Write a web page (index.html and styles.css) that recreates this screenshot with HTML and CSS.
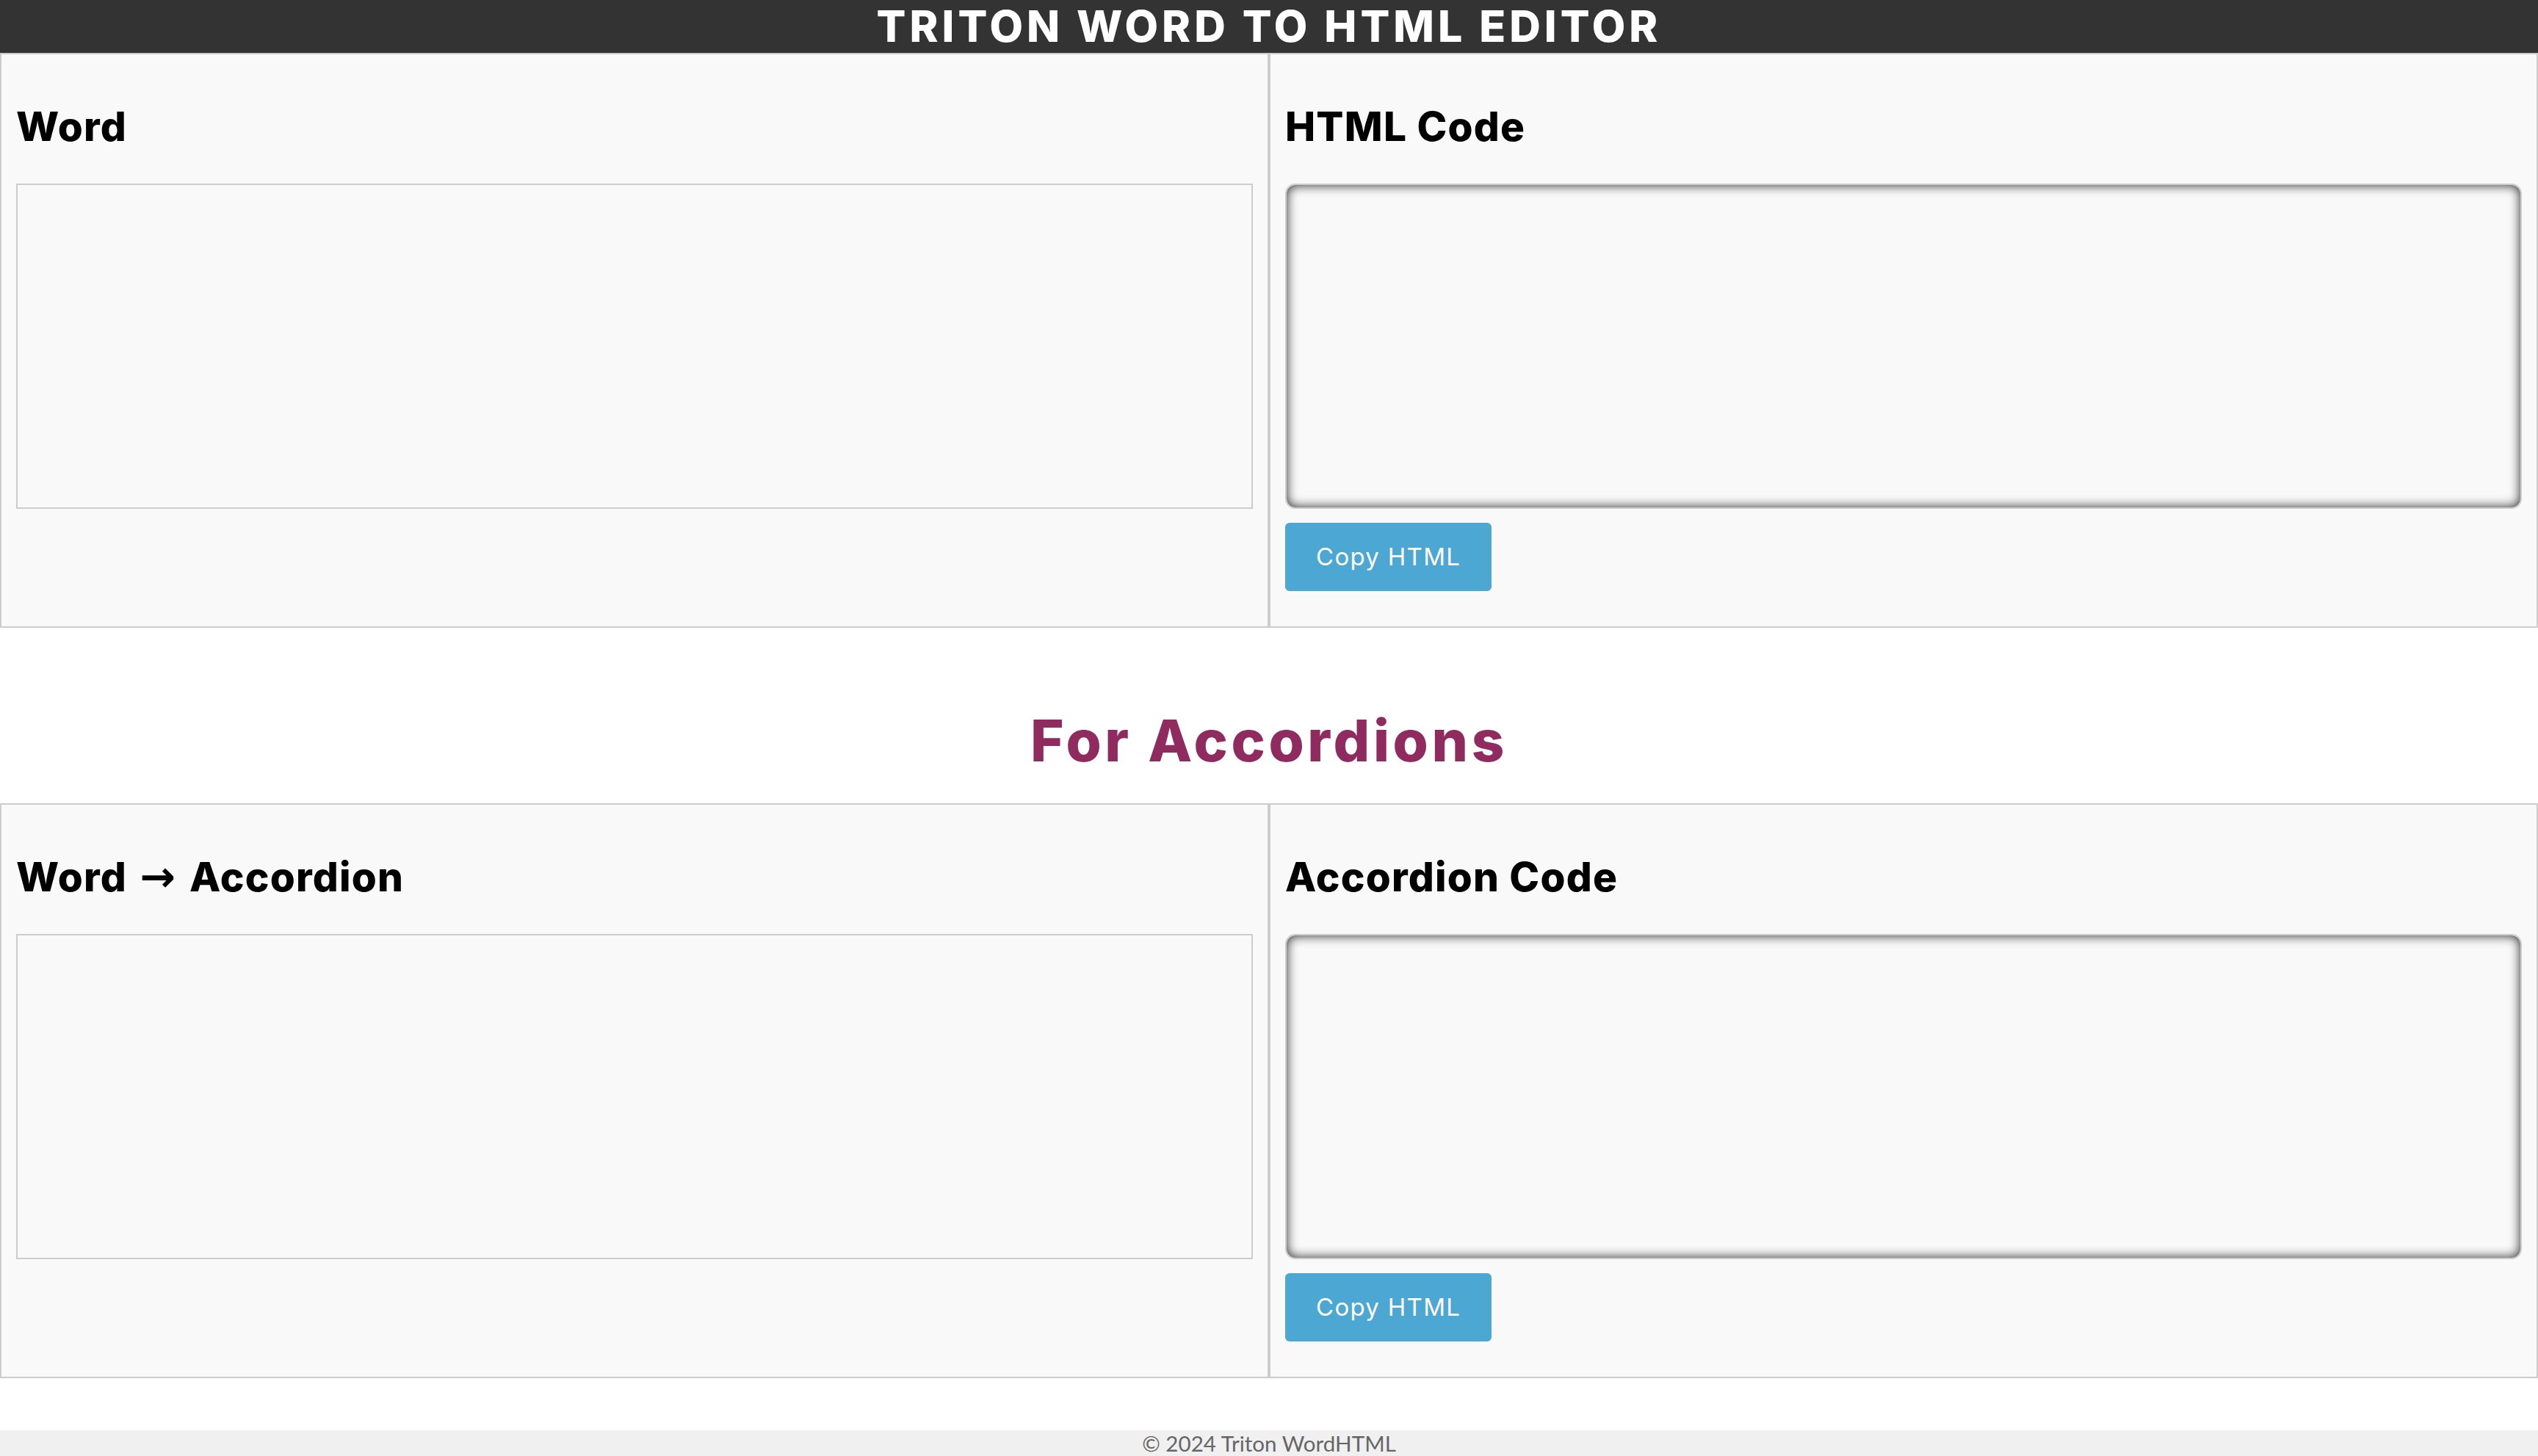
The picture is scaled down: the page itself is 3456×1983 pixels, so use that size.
FILE: index.html
```html
<!DOCTYPE html>
<html lang="en">
<head>
<meta charset="utf-8">
<title>Triton Word to HTML Editor</title>
<link rel="stylesheet" href="styles.css">
</head>
<body>
<header class="topbar">
  <h1 class="site-title">TRITON WORD TO HTML EDITOR</h1>
</header>
<main class="page">
  <section class="editor-row">
    <div class="panel">
      <h2 class="panel-title">Word</h2>
      <div class="word-box" contenteditable="true"></div>
    </div>
    <div class="panel">
      <h2 class="panel-title">HTML Code</h2>
      <textarea class="code-box"></textarea>
      <button class="copy-btn" type="button">Copy HTML</button>
    </div>
  </section>

  <h2 class="section-title">For Accordions</h2>

  <section class="editor-row">
    <div class="panel">
      <h2 class="panel-title">Word <span class="arrow">→</span> Accordion</h2>
      <div class="word-box" contenteditable="true"></div>
    </div>
    <div class="panel">
      <h2 class="panel-title">Accordion Code</h2>
      <textarea class="code-box"></textarea>
      <button class="copy-btn" type="button">Copy HTML</button>
    </div>
  </section>
</main>
<footer class="site-footer">
  <p class="copyright">© 2024 Triton WordHTML</p>
</footer>
</body>
</html>
```
FILE: styles.css
```css
* {
  box-sizing: border-box;
}

html, body {
  margin: 0;
  padding: 0;
}

body {
  background: #ffffff;
  font-family: Inter, "Open Sans", "DejaVu Sans", sans-serif;
  color: #000;
}

.topbar {
  background: #333333;
  height: 72px;
  display: flex;
  align-items: center;
  justify-content: center;
}

.site-title {
  margin: 0;
  color: #ffffff;
  font-family: Inter, "DejaVu Sans", sans-serif;
  font-weight: 800;
  font-size: 59px;
  line-height: 72px;
  letter-spacing: 5px;
  white-space: nowrap;
}

.page {
  display: flex;
  flex-direction: column;
}

.editor-row {
  display: grid;
  grid-template-columns: 1fr 1fr;
}

.panel {
  background: #f9f9f9;
  border: 2px solid #cccccc;
  padding: 20px;
  display: flex;
  flex-direction: column;
  align-items: flex-start;
}

.panel-title {
  margin: 45px 0;
  font-family: Inter, "DejaVu Sans", sans-serif;
  font-weight: 800;
  font-size: 55px;
  line-height: 66px;
  letter-spacing: 1.2px;
  color: #000;
}

.arrow {
  display: inline-block;
  margin: 0 6px 0 4px;
  font-size: 58px;
  letter-spacing: 0;
  font-family: "DejaVu Sans", sans-serif;
  font-weight: 700;
}

.word-box {
  width: 100%;
  height: 443px;
  border: 2px solid #cccccc;
  background: #f9f9f9;
}

.code-box {
  display: block;
  width: 100%;
  height: 443px;
  border: 2px solid #cccccc;
  border-radius: 14px;
  background: #f9f9f9;
  box-shadow: inset 0 0 15px #222222;
  resize: none;
  margin: 0;
  padding: 0;
}

.copy-btn {
  margin: 19px 0 28px;
  background: #4ca7d3;
  color: #ffffff;
  border: none;
  border-radius: 6px;
  padding: 26px 42px;
  font-family: Inter, "Open Sans", sans-serif;
  font-weight: 400;
  font-size: 33px;
  line-height: 41px;
  letter-spacing: 1.3px;
  cursor: pointer;
}

.section-title {
  margin: 107px 0 38px;
  text-align: center;
  color: #8f2b5f;
  font-family: Inter, "DejaVu Sans", sans-serif;
  font-weight: 800;
  font-size: 78px;
  line-height: 94px;
  letter-spacing: 4.6px;
}

.site-footer {
  margin-top: 71px;
  background: #f0f0f0;
  padding: 0 0 20px;
  text-align: center;
}

.copyright {
  margin: 0;
  font-family: Lato, "Liberation Sans", sans-serif;
  font-size: 29.6px;
  line-height: 36px;
  color: #666666;
}
```
